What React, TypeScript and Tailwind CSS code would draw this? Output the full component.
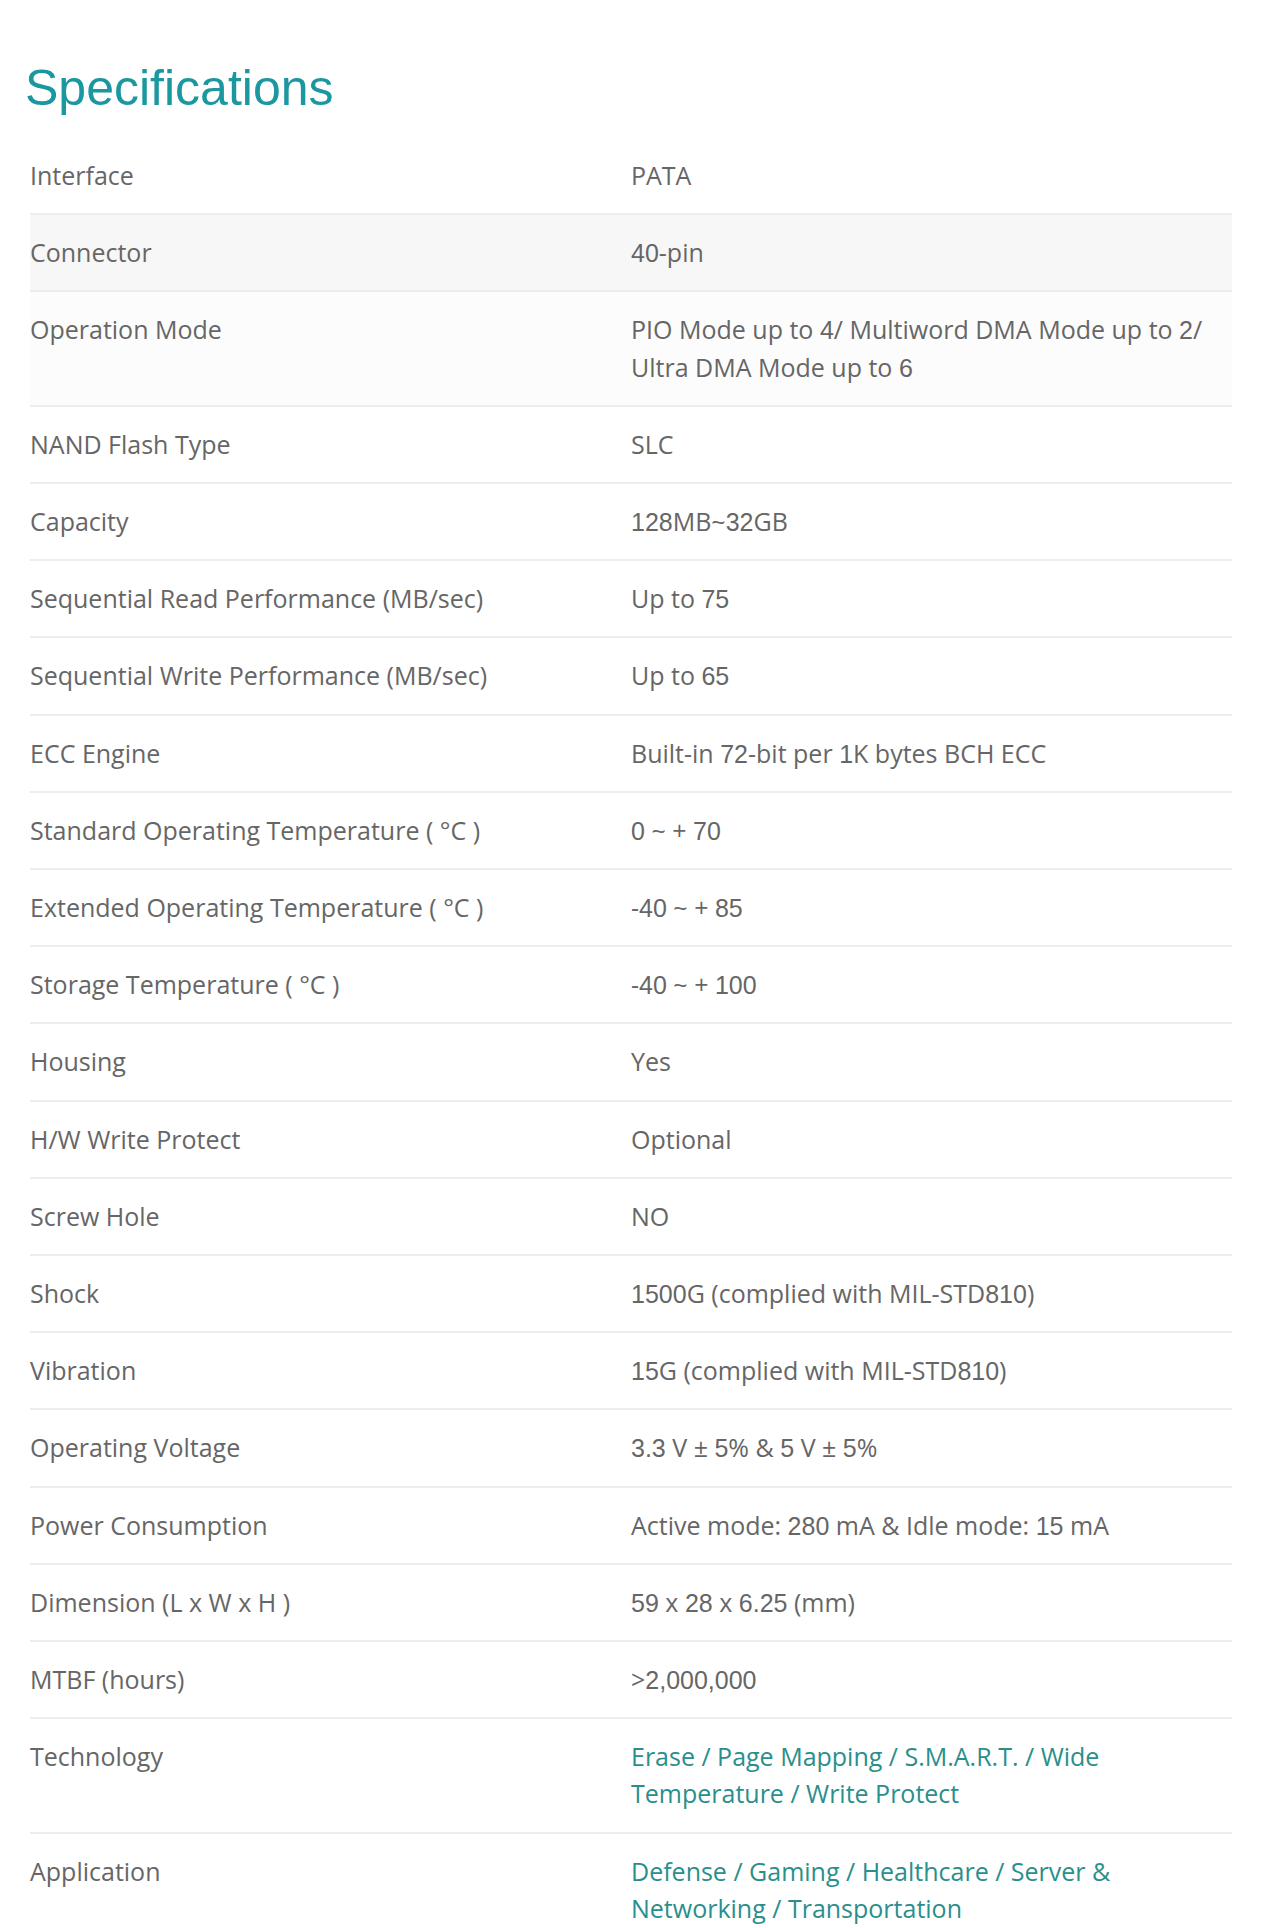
import React from 'react';

type Spec = { label: string; value: string; link?: boolean; shade?: string };

const specs: Spec[] = [
  { label: 'Interface', value: 'PATA' },
  { label: 'Connector', value: '40-pin', shade: 'bg-[#f7f7f7]' },
  {
    label: 'Operation Mode',
    value: 'PIO Mode up to 4/ Multiword DMA Mode up to 2/ Ultra DMA Mode up to 6',
    shade: 'bg-[#fcfcfc]',
  },
  { label: 'NAND Flash Type', value: 'SLC' },
  { label: 'Capacity', value: '128MB~32GB' },
  { label: 'Sequential Read Performance (MB/sec)', value: 'Up to 75' },
  { label: 'Sequential Write Performance (MB/sec)', value: 'Up to 65' },
  { label: 'ECC Engine', value: 'Built-in 72-bit per 1K bytes BCH ECC' },
  { label: 'Standard Operating Temperature ( °C )', value: '0 ~ + 70' },
  { label: 'Extended Operating Temperature ( °C )', value: '-40 ~ + 85' },
  { label: 'Storage Temperature ( °C )', value: '-40 ~ + 100' },
  { label: 'Housing', value: 'Yes' },
  { label: 'H/W Write Protect', value: 'Optional' },
  { label: 'Screw Hole', value: 'NO' },
  { label: 'Shock', value: '1500G (complied with MIL-STD810)' },
  { label: 'Vibration', value: '15G (complied with MIL-STD810)' },
  { label: 'Operating Voltage', value: '3.3 V ± 5% & 5 V ± 5%' },
  { label: 'Power Consumption', value: 'Active mode: 280 mA & Idle mode: 15 mA' },
  { label: 'Dimension (L x W x H )', value: '59 x 28 x 6.25 (mm)' },
  { label: 'MTBF (hours)', value: '>2,000,000' },
  {
    label: 'Technology',
    value: 'Erase / Page Mapping / S.M.A.R.T. / Wide Temperature / Write Protect',
    link: true,
  },
  {
    label: 'Application',
    value: 'Defense / Gaming / Healthcare / Server & Networking / Transportation',
    link: true,
  },
];

// digits on the source page render in a fallback sans
function Digits({ text }: { text: string }) {
  const parts = text.split(/(\d[\d.,]*)/);
  return (
    <>
      {parts.map((p, i) =>
        /^\d/.test(p) ? (
          <span key={i} className="font-['Liberation_Sans',Arial,sans-serif] leading-none">
            {p}
          </span>
        ) : (
          <React.Fragment key={i}>{p}</React.Fragment>
        )
      )}
    </>
  );
}

export default function App() {
  return (
    <div className="min-h-screen bg-white font-['Open_Sans',sans-serif]">
      <h2 className="pl-[25px] pt-[63px] font-['Liberation_Sans',Arial,sans-serif] text-[50px] leading-[50px] text-[#1b97a0]">
        Specifications
      </h2>

      <div className="mt-[25px] ml-[30px] w-[1202px]">
        {specs.map((s) => (
          <div
            key={s.label}
            className={`grid grid-cols-2 border-b-2 border-[#ededed] py-[19px] text-[25px] leading-[37.2px] ${s.shade ?? 'bg-white'}`}
          >
            <div className="text-[#666666]">{s.label}</div>
            <div className={s.link ? 'text-[#2a8f8c]' : 'text-[#666666]'}>
              {s.link ? s.value : <Digits text={s.value} />}
            </div>
          </div>
        ))}
      </div>
    </div>
  );
}
